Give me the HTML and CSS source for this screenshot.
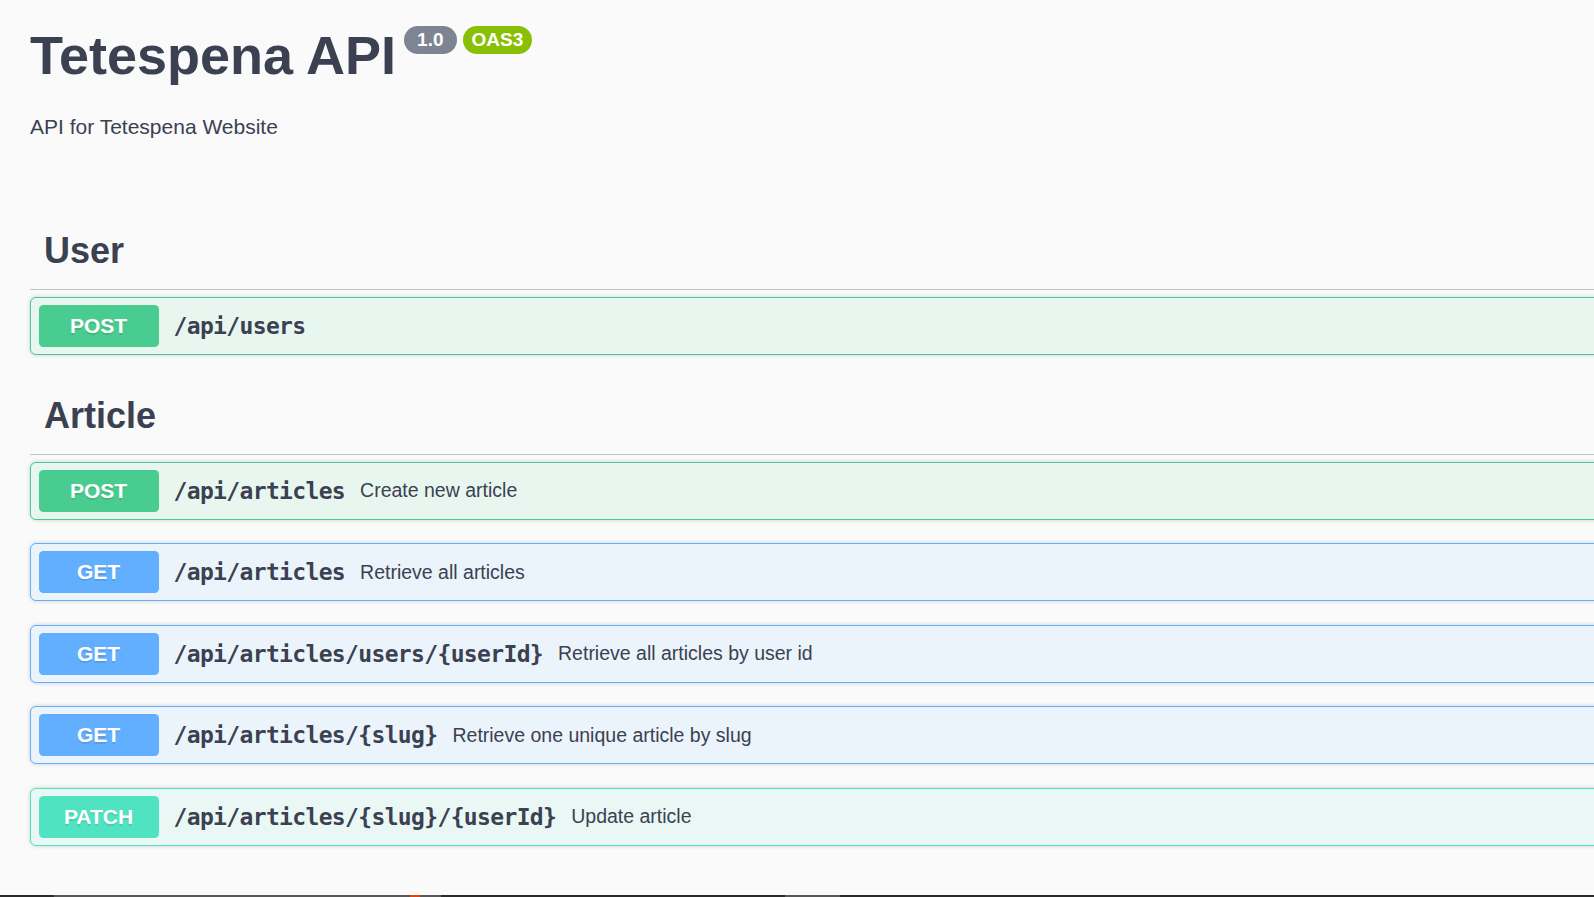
FILE: index.html
```html
<!DOCTYPE html>
<html lang="en">
<head>
<meta charset="utf-8">
<title>Tetespena API</title>
<link rel="stylesheet" href="styles.css">
</head>
<body>
<div class="page">
  <header class="info">
    <div class="title-row">
      <h2 class="title">Tetespena API</h2>
      <span class="badge badge-ver">1.0</span>
      <span class="badge badge-oas">OAS3</span>
    </div>
    <p class="desc">API for Tetespena Website</p>
  </header>

  <section class="tag-section">
    <h3 class="tag">User</h3>
    <div class="opblock op-post">
      <span class="method">POST</span>
      <span class="path">/api/users</span>
    </div>
  </section>

  <section class="tag-section">
    <h3 class="tag">Article</h3>
    <div class="opblock op-post">
      <span class="method">POST</span>
      <span class="path">/api/articles</span>
      <span class="summary">Create new article</span>
    </div>
    <div class="opblock op-get">
      <span class="method">GET</span>
      <span class="path">/api/articles</span>
      <span class="summary">Retrieve all articles</span>
    </div>
    <div class="opblock op-get">
      <span class="method">GET</span>
      <span class="path">/api/articles/users/{userId}</span>
      <span class="summary">Retrieve all articles by user id</span>
    </div>
    <div class="opblock op-get">
      <span class="method">GET</span>
      <span class="path">/api/articles/{slug}</span>
      <span class="summary">Retrieve one unique article by slug</span>
    </div>
    <div class="opblock op-patch">
      <span class="method">PATCH</span>
      <span class="path">/api/articles/{slug}/{userId}</span>
      <span class="summary">Update article</span>
    </div>
  </section>
</div>
<div class="player-bar">
  <span class="seg seg-a"></span>
  <span class="seg seg-b"><span class="dot"></span></span>
  <span class="seg seg-c"></span>
  <span class="seg seg-d"></span>
  <span class="seg seg-e"></span>
</div>
</body>
</html>
```
FILE: styles.css
```css
html, body {
  margin: 0;
  padding: 0;
  overflow: hidden;
  background: #fafafa;
  color: #3b4151;
  font-family: "Liberation Sans", Arial, sans-serif;
}

.page {
  width: 1700px;
  padding: 24px 0 0 30px;
  box-sizing: border-box;
}

.info {
  margin-bottom: 77px;
}

.title-row {
  display: flex;
  align-items: flex-start;
}

.title {
  margin: 0;
  font-size: 54px;
  line-height: 62px;
  font-weight: 700;
  color: #3b4151;
}

.badge {
  display: inline-block;
  height: 28px;
  line-height: 28px;
  margin-top: 1.5px;
  border-radius: 20px;
  color: #fff;
  font-size: 19px;
  font-weight: 700;
}

.badge-ver {
  margin-left: 8px;
  padding: 0 13px;
  background: #7d8492;
}

.badge-oas {
  margin-left: 6px;
  padding: 0 9px;
  background: #89bf04;
}

.desc {
  margin: 29px 0 0;
  font-size: 21px;
  line-height: 24px;
}

.tag-section {
  display: flex;
  flex-direction: column;
}

.tag-section + .tag-section {
  margin-top: 3px;
}

.tag {
  margin: 0 0 6.8px;
  padding: 14px 30px 17px 14px;
  font-size: 36px;
  line-height: 42px;
  font-weight: 700;
  border-bottom: 1px solid rgba(59, 65, 81, 0.3);
}

.opblock {
  display: flex;
  align-items: center;
  height: 58px;
  box-sizing: border-box;
  padding: 0 7.5px;
  margin-bottom: 23.4px;
  border: 1px solid;
  border-radius: 6px;
  box-shadow: 0 0 4.5px rgba(0, 0, 0, 0.19);
}

.method {
  flex: none;
  width: 120px;
  height: 42px;
  line-height: 42px;
  border-radius: 4.5px;
  text-align: center;
  color: #fff;
  font-size: 21px;
  font-weight: 700;
  text-shadow: 0 1.5px 0 rgba(0, 0, 0, 0.1);
}

.path {
  padding: 0 15px;
  font-family: "DejaVu Sans Mono", "Liberation Mono", monospace;
  font-size: 23px;
  font-weight: 700;
  letter-spacing: -0.65px;
  color: #3b4151;
}

.summary {
  font-size: 19.5px;
  color: #3b4151;
}

.op-post {
  background: #e8f6f0;
  border-color: #49cc90;
}
.op-post .method { background: #49cc90; }

.op-get {
  background: #ebf3fb;
  border-color: #61affe;
}
.op-get .method { background: #61affe; }

.op-patch {
  background: #e9f8f5;
  border-color: #50e3c2;
}
.op-patch .method { background: #50e3c2; }

.player-bar {
  position: fixed;
  left: 0;
  right: 0;
  bottom: 0;
  height: 2px;
  display: flex;
  background: #2b2b2b;
}

.seg { display: block; height: 100%; position: relative; }
.seg-a { width: 54px; background: #2b2b2b; }
.seg-b { width: 387px; background: #575757; }
.seg-c { width: 344px; background: #2b2b2b; }
.seg-d { width: 55px; background: #575757; }
.seg-e { flex: 1; background: #2b2b2b; }

.dot {
  position: absolute;
  left: 356px;
  top: 0;
  width: 10px;
  height: 2px;
  background: #e0440e;
}
```
